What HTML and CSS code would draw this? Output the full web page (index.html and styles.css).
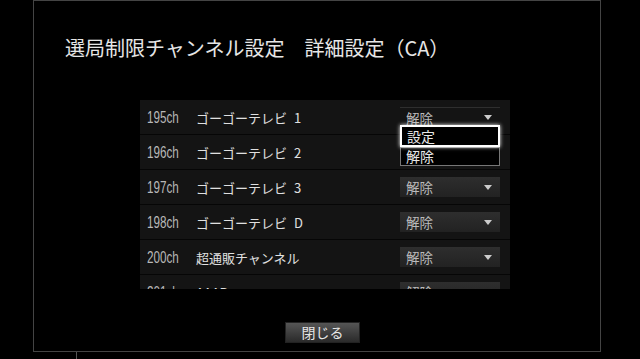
FILE: index.html
```html
<!DOCTYPE html>
<html>
<head>
  <title>選局制限チャンネル設定 詳細設定（CA）</title>
  <link rel="stylesheet" href="styles.css">
</head>
<body>
  <div class="frame">
    <h1 class="title">選局制限チャンネル設定　詳細設定（CA）</h1>

    <div class="channel-list">
      <div class="row">
        <span class="ch"><span>195ch</span></span>
        <span class="name">ゴーゴーテレビ 1</span>
        <div class="select open">
          <span>解除</span><i class="arrow"></i>
          <div class="options">
            <div class="option focused">設定</div>
            <div class="option">解除</div>
          </div>
        </div>
      </div>
      <div class="row">
        <span class="ch"><span>196ch</span></span>
        <span class="name">ゴーゴーテレビ 2</span>
      </div>
      <div class="row">
        <span class="ch"><span>197ch</span></span>
        <span class="name">ゴーゴーテレビ 3</span>
        <div class="select"><span>解除</span><i class="arrow"></i></div>
      </div>
      <div class="row">
        <span class="ch"><span>198ch</span></span>
        <span class="name">ゴーゴーテレビ D</span>
        <div class="select"><span>解除</span><i class="arrow"></i></div>
      </div>
      <div class="row">
        <span class="ch"><span>200ch</span></span>
        <span class="name">超通販チャンネル</span>
        <div class="select"><span>解除</span><i class="arrow"></i></div>
      </div>
      <div class="row">
        <span class="ch"><span>201ch</span></span>
        <span class="name">AAAB</span>
        <div class="select"><span>解除</span><i class="arrow"></i></div>
      </div>
    </div>

    <div class="footer">
      <button class="close-button">閉じる</button>
    </div>
  </div>
  <div class="stub"></div>
</body>
</html>
```

FILE: styles.css
```css
body {
  margin: 0;
  background-color: #000000;
  font-family: "Noto Sans CJK JP", "Noto Sans", sans-serif;
  color: #dddddd;
  overflow: hidden;
}

.frame {
  box-sizing: border-box;
  width: 568px;
  height: 352px;
  margin-left: 33px;
  border: 1px solid #444444;
  display: flex;
  flex-direction: column;
}

.title {
  margin: 34px 0 0 31px;
  font-size: 20px;
  font-weight: normal;
  line-height: 26px;
  color: #e6e6e6;
}

.channel-list {
  width: 370px;
  height: 189px;
  margin: 39px 0 0 106px;
  background-color: #141414;
  overflow: hidden;
  position: relative;
}

.row {
  box-sizing: border-box;
  height: 35px;
  display: flex;
  align-items: center;
  border-bottom: 1px solid #060606;
  position: relative;
}

.ch {
  width: 49px;
  padding-left: 7px;
  padding-top: 2px;
  font-family: "Liberation Sans", sans-serif;
  font-size: 16px;
  color: #b8b8b8;
}

.ch span {
  display: inline-block;
  transform: scaleX(0.73);
  transform-origin: left center;
}

.name {
  flex: 1;
  font-size: 13px;
  word-spacing: 4px;
  color: #e0e0e0;
}

.select {
  box-sizing: border-box;
  width: 100px;
  height: 20px;
  margin-right: 10px;
  padding: 0 6px;
  display: flex;
  align-items: center;
  justify-content: space-between;
  font-size: 13.5px;
  color: #bbbbbb;
  background: linear-gradient(#2e2e2e, #222222);
}

.select.open {
  background: none;
  border-top: 1px solid #2e2e2e;
  position: relative;
}

.arrow {
  width: 0;
  height: 0;
  margin-right: 2px;
  border-left: 4px solid transparent;
  border-right: 4px solid transparent;
  border-top: 5px solid #cccccc;
}

.options {
  position: absolute;
  left: 0;
  top: 17px;
  width: 100px;
  z-index: 2;
}

.option {
  box-sizing: border-box;
  height: 19px;
  padding-left: 5px;
  font-size: 14px;
  line-height: 17px;
  color: #e8e8e8;
  background-color: #000000;
  border: 1px solid #777777;
}

.option.focused {
  height: 22px;
  line-height: 18px;
  border: 2px solid #ffffff;
  box-shadow: 0 0 4px #ffffff;
  position: relative;
  z-index: 1;
}

.footer {
  margin: 30px 0 0 251px;
}

.close-button {
  width: 75px;
  height: 21px;
  padding: 0;
  font-family: "Noto Sans CJK JP", sans-serif;
  font-size: 14px;
  line-height: 19px;
  color: #e6e6e6;
  background: linear-gradient(#555555, #2a2a2a);
  border: 1px solid #222222;
}

.stub {
  width: 1px;
  height: 8px;
  margin-left: 76px;
  background-color: #555555;
}
```
